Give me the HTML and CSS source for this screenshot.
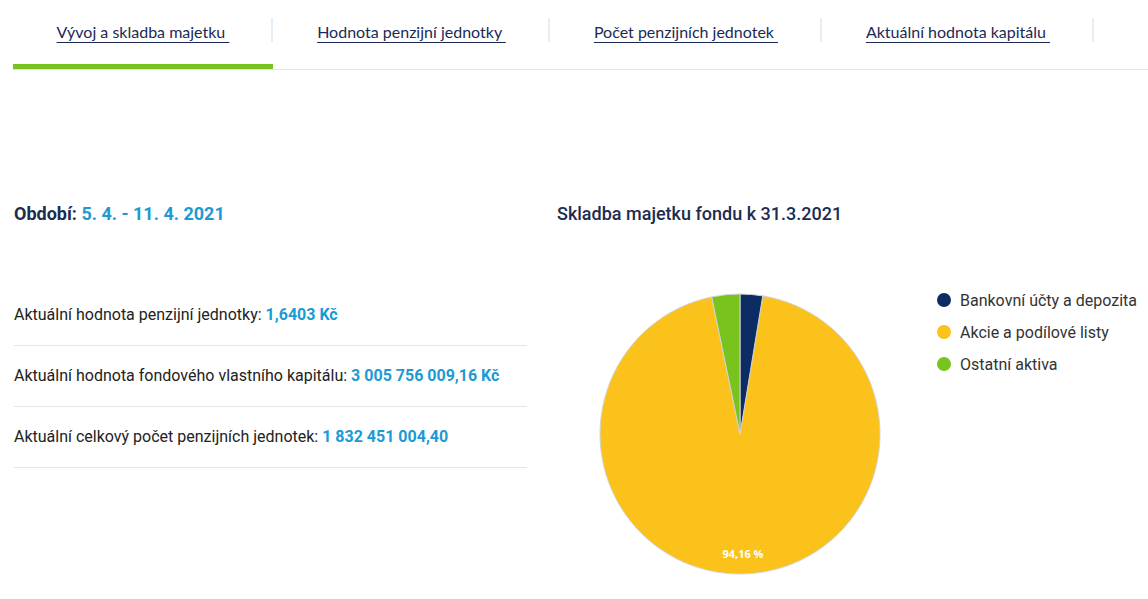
FILE: index.html
```html
<!DOCTYPE html>
<html lang="cs">
<head>
<meta charset="utf-8">
<title>Vývoj a skladba majetku</title>
<link rel="stylesheet" href="styles.css">
</head>
<body>
<nav class="tabs">
  <a class="tab tab-1 active" href="#"><span class="tab-label">Vývoj a skladba majetku </span></a>
  <a class="tab tab-2" href="#"><span class="tab-label">Hodnota penzijní jednotky </span></a>
  <a class="tab tab-3" href="#"><span class="tab-label">Počet penzijních jednotek </span></a>
  <a class="tab tab-4" href="#"><span class="tab-label">Aktuální hodnota kapitálu </span></a>
</nav>
<main class="content">
  <section class="col-left">
    <h2 class="period">Období: <span class="accent">5. 4. - 11. 4. 2021</span></h2>
    <ul class="stats">
      <li class="stat">Aktuální hodnota penzijní jednotky: <strong class="accent">1,6403 Kč</strong></li>
      <li class="stat">Aktuální hodnota fondového vlastního kapitálu: <strong class="accent">3 005 756 009,16 Kč</strong></li>
      <li class="stat">Aktuální celkový počet penzijních jednotek: <strong class="accent">1 832 451 004,40</strong></li>
    </ul>
  </section>
  <section class="col-right">
    <h2 class="chart-title">Skladba majetku fondu k 31.3.2021</h2>
    <div class="chart">
      <svg class="pie" width="300" height="300" viewBox="0 0 300 300">
        <path d="M150 150 L172.77 11.86 A140 140 0 1 1 121.71 12.89 Z" fill="#fbc21b" stroke="#d4d4d4" stroke-width="1"/>
        <path d="M150 150 L150 10 A140 140 0 0 1 172.77 11.86 Z" fill="#0c2d63" stroke="#d4d4d4" stroke-width="1"/>
        <path d="M150 150 L121.71 12.89 A140 140 0 0 1 150 10 Z" fill="#78c31e" stroke="#d4d4d4" stroke-width="1"/>
        <text class="pie-label" x="153" y="274" text-anchor="middle">94,16 %</text>
      </svg>
      <ul class="legend">
        <li class="legend-item"><span class="dot dot-navy"></span>Bankovní účty a depozita</li>
        <li class="legend-item"><span class="dot dot-yellow"></span>Akcie a podílové listy</li>
        <li class="legend-item"><span class="dot dot-green"></span>Ostatní aktiva</li>
      </ul>
    </div>
  </section>
</main>
</body>
</html>
```

FILE: styles.css
```css
* { box-sizing: border-box; }

body {
  margin: 0;
  background: #fff;
  font-family: Roboto, "Liberation Sans", sans-serif;
  color: #222;
}

.tabs {
  display: flex;
  margin-left: 13px;
  height: 70px;
  border-bottom: 1px solid #e3e3ea;
}

.tab {
  position: relative;
  display: flex;
  justify-content: center;
  padding-top: 22px;
  height: 69px;
  color: #1b2a55;
  font-family: Lato, "Open Sans", sans-serif;
  font-size: 16px;
  letter-spacing: 0;
  text-decoration: none;
}

.tab::after {
  content: "";
  position: absolute;
  right: 0;
  top: 18px;
  height: 24px;
  width: 2px;
  background: #e4eef4;
}

.tab-1 { width: 260px; }
.tab-2 { width: 277px; }
.tab-3 { width: 272px; }
.tab-4 { width: 272px; }

.tab-label {
  text-decoration: underline;
  text-underline-offset: 4px;
  text-decoration-thickness: 1px;
  white-space: pre;
}

.tab.active {
  border-bottom: 5px solid #78c31e;
}

.content {
  display: grid;
  grid-template-columns: 513px 1fr;
  column-gap: 30px;
  padding: 130px 0 0 14px;
}

.period,
.chart-title {
  margin: 0;
  height: 28px;
  line-height: 28px;
  font-size: 18px;
  color: #1c2b4f;
}

.period { font-weight: 700; }
.chart-title { font-weight: 500; }

.accent { color: #1b9ad3; font-weight: 700; }

.stats {
  list-style: none;
  margin: 57px 0 0;
  padding: 0;
}

.stat {
  height: 61px;
  line-height: 60px;
  font-size: 16px;
  color: #222;
  border-bottom: 1px solid #e2e5ec;
}

.chart {
  display: flex;
  align-items: flex-start;
  margin-top: 56px;
}

.pie {
  display: block;
  margin-left: 33px;
}

.pie-label {
  fill: #fff;
  font-family: "Open Sans", Roboto, sans-serif;
  font-weight: 700;
  font-size: 11px;
}

.legend {
  list-style: none;
  margin: 0 0 0 47px;
  padding: 0;
}

.legend-item {
  display: flex;
  align-items: center;
  height: 32px;
  font-size: 16px;
  color: #333;
  white-space: nowrap;
}

.dot {
  width: 14px;
  height: 14px;
  border-radius: 50%;
  margin-right: 9px;
  flex: none;
}

.dot-navy { background: #0c2d63; }
.dot-yellow { background: #fbc21b; }
.dot-green { background: #78c31e; }
```
